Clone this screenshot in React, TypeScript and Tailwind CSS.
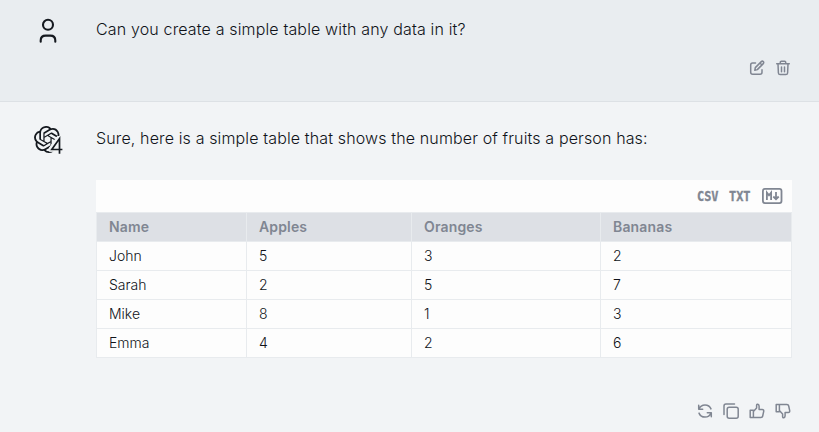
import type { ReactNode } from 'react';
import { SiOpenai } from 'react-icons/si';

const columns = ['Name', 'Apples', 'Oranges', 'Bananas'];
const rows = [
  ['John', '5', '3', '2'],
  ['Sarah', '2', '5', '7'],
  ['Mike', '8', '1', '3'],
  ['Emma', '4', '2', '6'],
];

function Icon({ label, children }: { label: string; children: ReactNode }) {
  return (
    <button aria-label={label} className="block size-4">
      <svg viewBox="0 0 16 16" className="size-4" fill="none" stroke="currentColor" strokeWidth="1.5" strokeLinecap="round" strokeLinejoin="round">
        {children}
      </svg>
    </button>
  );
}

function FormatLabel({ text }: { text: string }) {
  return (
    <svg width="21" height="20" viewBox="0 0 21 20" className="block overflow-visible" fill="currentColor" stroke="currentColor" strokeWidth=".35">
      <text x="0" y="15" textLength="21.5" lengthAdjust="spacingAndGlyphs" className="font-['DejaVu_Sans_Mono',monospace] text-[14px] font-bold">{text}</text>
    </svg>
  );
}

function UserIcon() {
  return (
    <svg width="18" height="26" viewBox="0 0 18 26" fill="none" stroke="#15191f" strokeWidth="2.1" strokeLinecap="round">
      <circle cx="9" cy="6.8" r="5" />
      <path d="M1.7 23.8v-1.3c0-3 2-4.9 5-4.9h4.6c3 0 5 1.9 5 4.9v1.3" />
    </svg>
  );
}

function BotIcon() {
  return (
    <div className="relative h-7 w-7 text-[#15191f]">
      <SiOpenai className="size-[27px]" />
      <svg width="15" height="19" viewBox="0 0 15 19" className="absolute left-[15px] top-[9px]">
        <path d="M8.2 1.5H15V19H8.5v-2.7H.3v-3.2z" fill="#f2f4f6" stroke="#f2f4f6" strokeWidth="1" />
        <path d="M10.5 18.7V3.6L2.8 14.5h10.6" fill="none" stroke="currentColor" strokeWidth="1.7" />
      </svg>
    </div>
  );
}

export default function App() {
  return (
    <main className="h-[432px] w-full overflow-hidden bg-[#f2f4f6] font-['Inter',sans-serif] font-light text-[#101319]">
      <section className="flex h-[102px] border-b border-[#dde1e5] bg-[#e9edf0]">
        <div className="w-24 shrink-0 pl-[39px] pt-[18px]"><UserIcon /></div>
        <div className="w-[696px] pt-4">
          <p className="whitespace-nowrap text-[16px] leading-[26px] tracking-[0.15px]">Can you create a simple table with any data in it?</p>
          <div className="mt-[18px] flex justify-end gap-[10px] pr-px text-[#808692]">
            <Icon label="Edit">
              <path d="M6.5 3H3.6C2.3 3 1.7 3.7 1.7 5v7.3c0 1.3.7 2 2 2H11c1.3 0 2-.7 2-2V9.8" />
              <path d="M5.8 10.3l.5-2.7 6-6c.6-.6 1.4-.6 2 0s.6 1.4 0 2l-6 6zM11 3l2 2" />
            </Icon>
            <Icon label="Delete">
              <path d="M1.7 3.8h12.6M5.3 3.5V2.3c0-.6.5-1 1-1h3.4c.6 0 1 .4 1 1v1.2M3 4l.4 9c.1 1 .7 1.6 1.7 1.6h5.8c1 0 1.6-.6 1.7-1.6l.4-9M6.5 7v4.8M9.5 7v4.8" />
            </Icon>
          </div>
        </div>
      </section>

      <section className="flex">
        <div className="w-24 shrink-0 pl-[34px] pt-6"><BotIcon /></div>
        <div className="w-[696px] pt-[23px]">
          <p className="whitespace-nowrap text-[16px] leading-[26px] tracking-[0.135px]">Sure, here is a simple table that shows the number of fruits a person has:</p>
          <div className="mt-[29px] bg-[#fdfdfd]">
            <div className="flex h-8 items-center justify-end pr-[9px] text-[#808692]">
              <button className="mr-[11px]" aria-label="Download CSV"><FormatLabel text="CSV" /></button>
              <button className="mr-[12px]" aria-label="Download TXT"><FormatLabel text="TXT" /></button>
              <button aria-label="Copy Markdown">
                <svg width="21" height="16" viewBox="0 0 21 16" className="block" fill="none" stroke="currentColor" strokeWidth="1.8">
                  <rect x=".9" y=".9" width="18.6" height="14.2" rx="2" />
                  <path d="M4.9 12V4.6l2.1 2.6 2.1-2.6V12M14 4v7M11.3 8.5L14 11.2l2.7-2.7" />
                </svg>
              </button>
            </div>
            <table className="w-[696px] table-fixed border-collapse text-left text-[14px] leading-5">
              <colgroup>
                <col className="w-[150px]" />
                <col className="w-[165px]" />
                <col className="w-[189px]" />
                <col className="w-[191px]" />
              </colgroup>
              <thead>
                <tr className="h-[29px] bg-[#dde0e5] text-[#808692]">
                  {columns.map((name) => <th key={name} className="border border-[#e8ebee] px-3 py-1 font-semibold tracking-[0.15px]">{name}</th>)}
                </tr>
              </thead>
              <tbody>
                {rows.map((row) => (
                  <tr key={row[0]} className="h-[29px]">
                    {row.map((value, i) => <td key={i} className="border border-[#e8ebee] px-3 py-1">{value}</td>)}
                  </tr>
                ))}
              </tbody>
            </table>
          </div>
          <div className="mt-[45px] flex justify-end gap-[10px] pr-px text-[#808692]">
            <Icon label="Regenerate">
              <path d="M1.7 2.3v4h4M14.3 13.7v-4h-4M2 6C3 3.5 5.2 1.9 8 1.9c2.7 0 5 1.5 6 4M14 10c-1 2.5-3.2 4.1-6 4.1-2.7 0-5-1.5-6-4" />
            </Icon>
            <Icon label="Copy">
              <rect x="4.2" y="4.2" width="11" height="11" rx="2" />
              <path d="M1 11.5V3c0-1.3.8-2 2-2h8.5" />
            </Icon>
            <Icon label="Good response">
              <path d="M1.2 7.2h3.2v7.3H1.2zM4.4 8.4L7.6 5V2.5c0-1 .6-1.5 1.3-1.2.9.3 1.2 1 1.2 2v3.2h3.2c1 0 1.6.8 1.4 1.8l-1 4.7c-.2 1-.8 1.5-1.8 1.5H4.4" />
            </Icon>
            <Icon label="Bad response">
              <path d="M1.2 1.5h3.2v7.3H1.2zM4.4 1.5h7.5c1 0 1.6.5 1.8 1.5l1 4.7c.2 1-.4 1.8-1.4 1.8h-3.2v3.2c0 1-.3 1.7-1.2 2-.7.3-1.3-.2-1.3-1.2V11L4.4 7.6" />
            </Icon>
          </div>
        </div>
      </section>
    </main>
  );
}
